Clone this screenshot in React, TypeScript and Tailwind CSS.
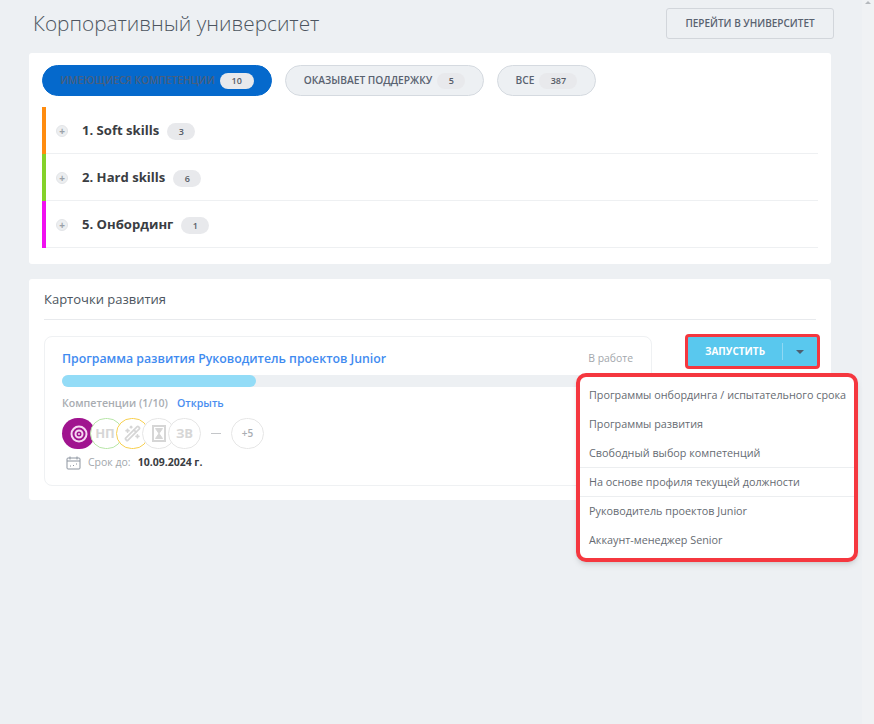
import React from 'react';
import { WandSparkles } from 'lucide-react';

const font = "font-['Open_Sans','Noto_Sans',sans-serif]";

const Count: React.FC<{ value: string; className?: string }> = ({ value, className }) => (
  <span className={`h-[16px] rounded-full bg-[#e8e9ec] flex items-center justify-center text-[9px] font-semibold text-[#555b66] ${className ?? ''}`}>
    {value}
  </span>
);

const FilterPill: React.FC<{ label: string; count: string; countWidth: string; active?: boolean; width: string }> = ({ label, count, countWidth, active, width }) => (
  <div className={`h-[31px] rounded-full border flex items-center justify-center gap-[5px] text-[10.2px] font-semibold ${width} ${active ? 'bg-[#0569cc] border-[#0569cc] text-[#4a5f7c]' : 'bg-[#edf0f3] border-[#d5dae0] text-[#596270]'}`}>
    <span className="whitespace-nowrap">{label}</span>
    <Count value={count} className={countWidth} />
  </div>
);

const SkillRow: React.FC<{ title: string; count: string; color: string }> = ({ title, count, color }) => (
  <div className="flex h-[47px]">
    <div className={`w-[4px] shrink-0 ${color}`}></div>
    <div className="flex-1 flex items-center border-b border-[#eef0f2] pl-[10px] pt-[1px]">
      <span className="w-[12px] h-[12px] rounded-full bg-[#eceef0] flex items-center justify-center text-[10px] leading-none font-bold text-[#9ba1a8] border border-[#e3e5e8]">+</span>
      <span className="ml-[14px] text-[13.1px] font-bold text-[#3a3d42]">{title}</span>
      <Count value={count} className="ml-[8px] w-[28px] h-[17px] mt-[2px]" />
    </div>
  </div>
);

const Circle: React.FC<{ children: React.ReactNode; className?: string }> = ({ children, className }) => (
  <div className={`relative w-[33px] h-[31px] rounded-full border-[1.5px] bg-white flex items-center justify-center text-[13px] font-bold text-[#d6d6d6] shrink-0 ${className ?? ''}`}>
    {children}
  </div>
);

const App: React.FC = () => {
  return (
    <div className={`relative w-[874px] h-[724px] overflow-hidden bg-[#edf0f3] ${font}`}>
      {/* Scrollbar strip */}
      <div className="absolute right-0 top-0 bottom-0 w-[12px] bg-[#f0f2f4]">
        <div className="mx-auto mt-[1px] w-0 h-0 border-x-[3px] border-x-transparent border-b-[3px] border-b-[#b5b9bd]"></div>
      </div>

      <div className="w-[831px] ml-[29px]">
        {/* Header */}
        <div className="w-[805px] h-[53px] flex items-start justify-between pl-[4px]">
          <h1 className="mt-[7px] text-[20.8px] leading-[32px] font-light text-[#4c5560]">Корпоративный университет</h1>
          <button className="mt-[8px] w-[168px] h-[31px] rounded-[3px] border border-[#d2d6db] text-[10px] font-semibold text-[#596270]">
            ПЕРЕЙТИ В УНИВЕРСИТЕТ
          </button>
        </div>

        {/* Competencies */}
        <section className="w-[802px] h-[211px] bg-white rounded-[3px] pl-[13px] pr-[13px] pt-[12px]">
          <div className="flex gap-[13px]">
            <FilterPill label="ИМЕЮЩИЕСЯ КОМПЕТЕНЦИИ" count="10" countWidth="w-[34px]" active width="w-[230px]" />
            <FilterPill label="ОКАЗЫВАЕТ ПОДДЕРЖКУ" count="5" countWidth="w-[28px]" width="w-[199px]" />
            <FilterPill label="ВСЕ" count="387" countWidth="w-[38px]" width="w-[99px]" />
          </div>
          <div className="mt-[11px]">
            <SkillRow title="1. Soft skills" count="3" color="bg-[#ff8c0f]" />
            <SkillRow title="2. Hard skills" count="6" color="bg-[#84d12a]" />
            <SkillRow title="5. Онбординг" count="1" color="bg-[#f010f0]" />
          </div>
        </section>

        {/* Development cards */}
        <section className="w-[802px] h-[221px] mt-[15px] bg-white rounded-[3px] px-[15px]">
          <div className="h-[41px] pt-[1px] flex items-center border-b border-[#e8eaed] text-[13px] text-[#4c5560]">Карточки развития</div>

          <div className="w-[776px] mt-[16px] flex items-start">
            <div className="w-[608px] h-[150px] shrink-0 rounded-[8px] border border-[#eff1f3] pt-[13px] pl-[17px] overflow-hidden">
              <div className="flex items-center justify-between pr-[18px]">
                <span className="text-[12.3px] font-semibold text-[#3f8bf0]">Программа развития Руководитель проектов Junior</span>
                <span className="text-[10.4px] text-[#a3a7ac]">В работе</span>
              </div>
              <div className="mt-[7px] h-[12px] w-[600px] rounded-full bg-[#edf0f3]">
                <div className="h-full w-[194px] rounded-full bg-[#93dcf7]"></div>
              </div>
              <div className="mt-[9px] flex items-center text-[10.6px] font-semibold">
                <span className="text-[#a9adb2]">Компетенции (1/10)</span>
                <span className="ml-[9px] text-[#4b8ef0]">Открыть</span>
              </div>
              <div className="mt-[6px] flex items-center">
                <div className="w-[33px] h-[31px] rounded-full bg-[#a0148f] flex items-center justify-center shrink-0">
                  <svg width="18" height="18" viewBox="0 0 18 18" fill="none" stroke="#f6d8f2">
                    <circle cx="9" cy="9" r="7.5" strokeWidth="2" />
                    <circle cx="9" cy="9" r="3.5" strokeWidth="2" />
                    <circle cx="9" cy="9" r="1" fill="#f6d8f2" stroke="none" />
                  </svg>
                </div>
                <Circle className="ml-[-5px] border-[#b8e6a8] pr-[3px] text-[12px]">НП</Circle>
                <Circle className="ml-[-7px] border-[#f8d050]"><WandSparkles size={17} strokeWidth={2.4} /></Circle>
                <Circle className="ml-[-7px] border-[#e6e6e6]">
                  <svg width="14" height="17" viewBox="0 0 14 17" fill="none" stroke="#d6d6d6" strokeWidth="2">
                    <rect x="1" y="1" width="12" height="15" />
                    <path d="M3.5 3.5h7L3.5 13.5h7z" fill="#d6d6d6" strokeWidth="1" />
                  </svg>
                </Circle>
                <Circle className="ml-[-7px] border-[#e6e6e6]">ЗВ</Circle>
                <span className="ml-[10px] w-[10px] h-px bg-[#c4c6c9]"></span>
                <div className="ml-[10px] w-[33px] h-[31px] rounded-full border-[1.5px] border-[#e6e6e6] flex items-center justify-center text-[10px] font-semibold text-[#a9adb2]">+5</div>
              </div>
              <div className="mt-[6px] ml-[4px] flex items-center text-[10.5px]">
                <svg width="15" height="14" viewBox="0 0 15 14" fill="none" stroke="#8d95a0" strokeWidth="1">
                  <rect x="1" y="2" width="13" height="11" rx="1" />
                  <path d="M1 5h13M4 0.5v3M11 0.5v3" />
                  <path d="M4 10h1M7 9.5h1M10 8h1" strokeWidth="1.2" />
                </svg>
                <span className="ml-[7px] text-[#a3a7ac]">Срок до:</span>
                <span className="ml-[7px] font-bold text-[#3a3d42]">10.09.2024 г.</span>
              </div>
            </div>

            {/* Launch button */}
            <div className="ml-[33px] mt-[-2px] w-[135px] h-[35px] shrink-0 rounded-[4px] border-[3px] border-[#f5373f] bg-[#59c8ee] flex items-center text-white">
              <span className="w-[94px] text-center text-[10px] font-bold">ЗАПУСТИТЬ</span>
              <span className="w-px h-[17px] bg-[#8fd8f3]"></span>
              <span className="flex-1 flex justify-center">
                <span className="w-0 h-0 border-x-[4px] border-x-transparent border-t-[4px] border-t-[#4c5f70]"></span>
              </span>
            </div>
          </div>
        </section>
      </div>

      {/* Launch dropdown */}
      <div className="absolute left-[576px] top-[373px] w-[282px] h-[189px] rounded-[10px] border-[4px] border-[#f5373f] bg-white shadow-md text-[10.8px] text-[#666b72] overflow-hidden">
        <div className="pt-[4px]">
          <div className="h-[29px] pl-[9px] flex items-center whitespace-nowrap">Программы онбординга / испытательного срока</div>
          <div className="h-[29px] pl-[9px] flex items-center">Программы развития</div>
          <div className="h-[29px] pl-[9px] flex items-center border-b border-[#eceef0]">Свободный выбор компетенций</div>
          <div className="h-[29px] pl-[9px] flex items-center border-b border-[#eceef0]">На основе профиля текущей должности</div>
          <div className="h-[29px] pl-[9px] flex items-center">Руководитель проектов Junior</div>
          <div className="h-[29px] pl-[9px] flex items-center">Аккаунт-менеджер Senior</div>
        </div>
      </div>
    </div>
  );
};

export default App;
